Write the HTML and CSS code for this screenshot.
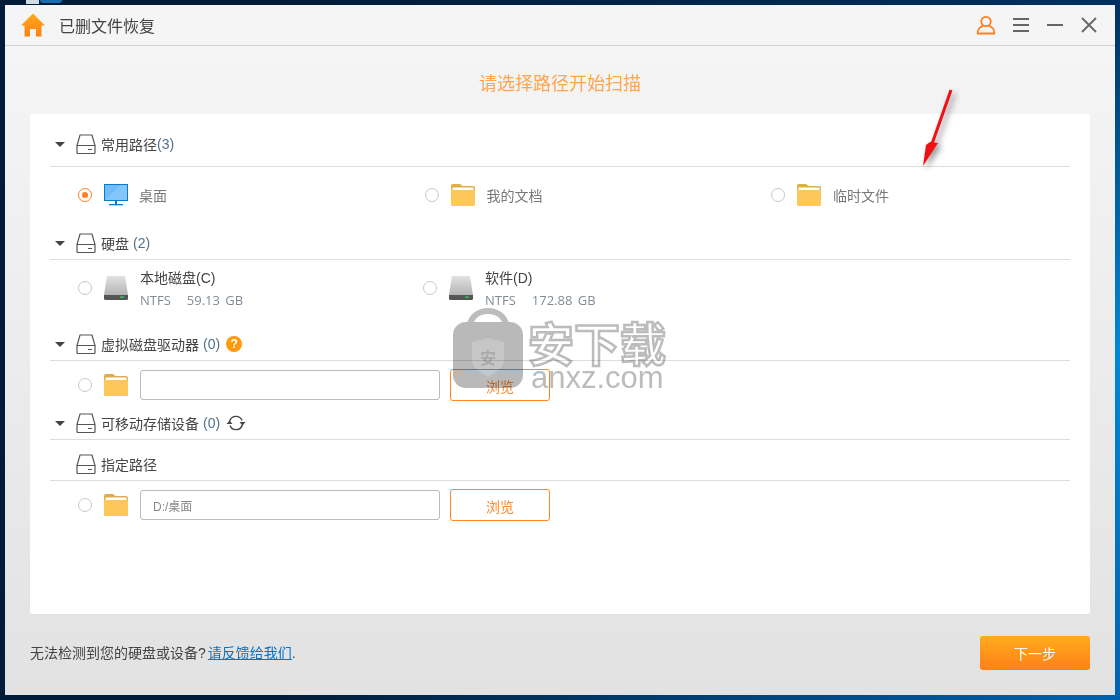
FILE: index.html
```html
<!DOCTYPE html>
<html>
<head>
    <meta charset="UTF-8">
    <title>已删文件恢复</title>
    <link rel="stylesheet" href="styles.css">
</head>
<body>
    <svg width="0" height="0" class="defs">
        <defs>
            <symbol id="disk" viewBox="0 0 20 20">
                <path d="M4 1h12l3 10.500v7a1 1 0 0 1-1 1h-16a1 1 0 0 1-1-1v-7zM1 11.500h18M12 15.500h4" fill="none" stroke="#555" stroke-width="1.200"/>
            </symbol>
            <symbol id="folder" viewBox="0 0 24 22">
                <path d="M0 2a2 2 0 0 1 2-2h7l2.500 2h10.500a2 2 0 0 1 2 2v4h-24z" fill="#dcae4e"/>
                <rect x="1.500" y="3.500" width="21" height="3" fill="#fff"/>
                <path d="M0 6h24v14.500a1.500 1.500 0 0 1-1.500 1.500h-21a1.500 1.500 0 0 1-1.500-1.500z" fill="#fdc759"/>
            </symbol>
            <symbol id="hdd" viewBox="0 0 24 24">
                <linearGradient id="hddtop" x1="0" y1="0" x2="0" y2="1">
                    <stop offset="0" stop-color="#e2e2e2"/>
                    <stop offset="1" stop-color="#b4b4b4"/>
                </linearGradient>
                <path d="M3 0h18l3 19h-24z" fill="url(#hddtop)"/>
                <path d="M0 19h24v3.500a1.500 1.500 0 0 1-1.500 1.500h-21a1.500 1.500 0 0 1-1.500-1.500z" fill="#555"/>
                <rect x="16" y="20.500" width="4" height="1.300" fill="#3fce5c"/>
            </symbol>
        </defs>
    </svg>

    <div class="desk-icon"></div>
    <div class="desk-ball"></div>

    <div class="window">
        <div class="titlebar">
            <svg class="home-icon" width="26" height="24" viewBox="0 0 26 24">
                <defs>
                    <linearGradient id="homefill" x1="0" y1="0" x2="0" y2="1">
                        <stop offset="0" stop-color="#ffaa1c"/>
                        <stop offset="1" stop-color="#ff7f16"/>
                    </linearGradient>
                </defs>
                <path d="M13 .5L25 12.500h-3.500V23.500h-5.500v-7.500h-6v7.500H4.500V12.500H1z" fill="url(#homefill)"/>
            </svg>
            <span class="app-name">已删文件恢复</span>
            <div class="win-btns">
                <svg width="20" height="20" viewBox="0 0 20 20" fill="none" stroke="#ff7f1e" stroke-width="1.800">
                    <circle cx="10" cy="6.500" r="4.700"/>
                    <path d="M1.500 18.500c0-4.500 3-7 5.500-7.500M18.500 18.500c0-4.500-3-7-5.500-7.500M1 18.500h18"/>
                </svg>
                <svg width="18" height="16" viewBox="0 0 18 16" fill="#666">
                    <rect x="1" y="1" width="16" height="2"/>
                    <rect x="1" y="7" width="16" height="2"/>
                    <rect x="1" y="13" width="16" height="2"/>
                </svg>
                <svg width="18" height="16" viewBox="0 0 18 16" fill="#666">
                    <rect x="1" y="7" width="16" height="2"/>
                </svg>
                <svg width="18" height="16" viewBox="0 0 16 16" fill="none" stroke="#666" stroke-width="1.800">
                    <path d="M1 1l14 14M15 1L1 15"/>
                </svg>
            </div>
        </div>

        <h2 class="page-title">请选择路径开始扫描</h2>

        <div class="card">
            <div class="sec-head sec-first">
                <span class="caret"></span>
                <svg class="disk" width="20" height="20"><use href="#disk"/></svg>
                <span>常用路径</span><span class="count">(3)</span>
            </div>
            <div class="row row-common">
                <div class="opt">
                    <span class="radio checked"></span>
                    <svg class="item-icon" width="24" height="22" viewBox="0 0 24 22">
                        <rect x=".5" y=".5" width="23" height="16" fill="#6fbcf8" stroke="#0a7ac8"/>
                        <path d="M1 16L17 1h6v15z" fill="#82c6fb"/>
                        <rect x="11" y="17" width="2" height="3" fill="#0a7ac8"/>
                        <rect x="5" y="20" width="14" height="1.300" fill="#0a7ac8"/>
                    </svg>
                    <span class="opt-name">桌面</span>
                </div>
                <div class="opt">
                    <span class="radio"></span>
                    <svg class="item-icon folder-icon" width="24" height="22"><use href="#folder"/></svg>
                    <span class="opt-name">我的文档</span>
                </div>
                <div class="opt">
                    <span class="radio"></span>
                    <svg class="item-icon folder-icon" width="24" height="22"><use href="#folder"/></svg>
                    <span class="opt-name">临时文件</span>
                </div>
            </div>

            <div class="sec-head">
                <span class="caret"></span>
                <svg class="disk" width="20" height="20"><use href="#disk"/></svg>
                <span>硬盘</span><span class="count count-gap">(2)</span>
            </div>
            <div class="row row-hdd">
                <div class="opt opt-hdd">
                    <span class="radio"></span>
                    <svg class="item-icon" width="24" height="24"><use href="#hdd"/></svg>
                    <div class="drive">
                        <div class="drive-name">本地磁盘(C)</div>
                        <div class="drive-info"><span>NTFS</span><span>59.13 GB</span></div>
                    </div>
                </div>
                <div class="opt opt-hdd">
                    <span class="radio"></span>
                    <svg class="item-icon" width="24" height="24"><use href="#hdd"/></svg>
                    <div class="drive">
                        <div class="drive-name">软件(D)</div>
                        <div class="drive-info"><span>NTFS</span><span>172.88 GB</span></div>
                    </div>
                </div>
            </div>

            <div class="sec-head">
                <span class="caret"></span>
                <svg class="disk" width="20" height="20"><use href="#disk"/></svg>
                <span>虚拟磁盘驱动器</span><span class="count count-gap">(0)</span>
                <span class="help">?</span>
            </div>
            <div class="row path-row">
                <span class="radio"></span>
                <svg class="item-icon" width="24" height="22"><use href="#folder"/></svg>
                <div class="path-box"></div>
                <div class="browse">浏览</div>
            </div>

            <div class="sec-head sec-usb">
                <span class="caret"></span>
                <svg class="disk" width="20" height="20"><use href="#disk"/></svg>
                <span>可移动存储设备</span><span class="count count-gap">(0)</span>
                <svg class="refresh" width="20" height="16" viewBox="0 0 20 16" fill="none" stroke="#444" stroke-width="1.400">
                    <path d="M3.600 6.500A6.500 6.500 0 0 1 16 5.500M16.400 9.500A6.500 6.500 0 0 1 4 10.500"/>
                    <path d="M13.500 7h6l-3 3.500zM.5 9h6l-3-3.500z" fill="#444" stroke="none"/>
                </svg>
            </div>

            <div class="sec-head sec-custom">
                <span class="caret-space"></span>
                <svg class="disk" width="20" height="20"><use href="#disk"/></svg>
                <span>指定路径</span>
            </div>
            <div class="row path-row">
                <span class="radio"></span>
                <svg class="item-icon" width="24" height="22"><use href="#folder"/></svg>
                <div class="path-box"><span class="path-text">D:/桌面</span></div>
                <div class="browse">浏览</div>
            </div>
        </div>

        <div class="footer">
            <span class="footer-text">无法检测到您的硬盘或设备?<a href="#" class="link">请反馈给我们</a>.</span>
            <div class="next-btn">下一步</div>
        </div>

        <!-- 水印 -->
        <div class="watermark">
            <svg class="wm-bag" width="72" height="80" viewBox="0 0 72 80">
                <path d="M17 18C20 7 28 3 36 3s16 4 19 15" fill="none" stroke="#bdbdbd" stroke-width="6"/>
                <rect x="1" y="14" width="70" height="66" rx="13" fill="#b9b9b9"/>
                <path d="M36 30l16 4v18c0 8-8 12-16 17-8-5-16-9-16-17V34z" fill="#c6c6c6"/>
                <text x="36" y="56" text-anchor="middle" class="wm-shield">安</text>
            </svg>
            <div class="wm-text">
                <span class="wm-cn">安下载</span>
                <span class="wm-en">anxz.com</span>
            </div>
        </div>

        <!-- 红色箭头 -->
        <svg class="arrow" width="40" height="84" viewBox="0 0 40 84">
            <path d="M30 1L11 55" stroke="#f20f14" stroke-width="3" fill="none"/>
            <path d="M2 77L5 56L9 53L17 54z" fill="#f20f14"/>
        </svg>
    </div>
</body>
</html>
```

FILE: styles.css
```css
* {
    box-sizing: border-box;
}

body {
    margin: 0;
    padding: 5px;
    height: 700px;
    overflow: hidden;
    background:
        linear-gradient(90deg, #001c38 0%, #001c38 25%, rgba(0, 28, 56, 0) 100%),
        linear-gradient(180deg, #00305f 0%, #0088d8 50%, #0062b0 100%);
    font-family: "Liberation Sans", "Noto Sans CJK SC", sans-serif;
    font-size: 14px;
    color: #444;
}

.defs {
    position: absolute;
}

/* 桌面上露出来的一点图标 */
.desk-icon {
    position: absolute;
    left: 26px;
    top: 0;
    width: 13px;
    height: 4px;
    background: #d5dbe2;
}

.desk-ball {
    position: absolute;
    left: 40px;
    top: 0;
    width: 22px;
    height: 3px;
    border-radius: 0 0 11px 11px;
    background: #1a6cb0;
}

.window {
    position: relative;
    width: 1110px;
    height: 690px;
    background: linear-gradient(180deg, #f6f6f6 0%, #e2e2e2 100%);
}

.titlebar {
    display: flex;
    align-items: center;
    height: 41px;
    padding: 0 17px 0 15px;
    background: #f5f5f5;
    border-bottom: 1px solid #d2d2d2;
}

.app-name {
    margin-left: 13px;
    font-size: 16px;
    color: #444;
}

.win-btns {
    display: flex;
    align-items: center;
    gap: 16px;
    margin-left: auto;
}

.page-title {
    margin: 0;
    height: 68px;
    line-height: 76px;
    text-align: center;
    font-size: 18px;
    font-weight: normal;
    color: #ffa54d;
}

.card {
    height: 500px;
    margin: 0 25px;
    padding: 0 20px;
    background: #fff;
    border-radius: 3px;
}

.sec-head {
    display: flex;
    align-items: center;
    border-bottom: 1px solid #ddd;
    padding-bottom: 6px;
}

.sec-first {
    padding-top: 20px;
    padding-bottom: 12px;
}

.sec-usb {
    margin-top: 4px;
}

.sec-custom {
    padding-top: 14px;
}

.caret {
    width: 0;
    height: 0;
    margin: 0 11px 0 5px;
    border-left: 5px solid transparent;
    border-right: 5px solid transparent;
    border-top: 5px solid #444;
}

.caret-space {
    width: 26px;
}

.disk {
    margin-right: 5px;
}

.count {
    color: #50708c;
}

.count-gap {
    margin-left: 4px;
}

.help {
    width: 16px;
    height: 16px;
    margin-left: 6px;
    border-radius: 50%;
    background: #ff9a0e;
    color: #fff;
    font-size: 12px;
    font-weight: bold;
    line-height: 16px;
    text-align: center;
}

.refresh {
    margin-left: 6px;
}

.row {
    display: flex;
    align-items: center;
}

.row-common {
    height: 66px;
    align-items: flex-start;
    padding-top: 17px;
}

.row-hdd {
    height: 74px;
    align-items: flex-start;
    padding-top: 7px;
}

.opt {
    flex: none;
    display: flex;
    align-items: center;
    width: 346.500px;
    padding-left: 28px;
}

.opt-hdd {
    width: 345px;
}

.opt-hdd .radio,
.opt-hdd .item-icon {
    margin-bottom: 2px;
}

.radio {
    flex: none;
    width: 14px;
    height: 14px;
    border: 1px solid #c8c8c8;
    border-radius: 50%;
    background: #fff;
}

.radio.checked {
    border-color: #ff7f2a;
    padding: 3px;
    background: #ff7f2a content-box;
}

.item-icon {
    margin-left: 12px;
    flex: none;
}

.folder-icon {
    margin-right: 1px;
}

.opt-name {
    margin-left: 11px;
    color: #777;
}

.drive {
    margin-left: 12px;
}

.drive-name {
    color: #444;
    line-height: 22px;
}

.drive-info {
    display: flex;
    gap: 16px;
    color: #7f8c98;
    line-height: 22px;
    font-family: "Open Sans", "Noto Sans CJK SC", sans-serif;
    font-size: 13px;
    word-spacing: 2px;
}

.path-row {
    height: 48px;
    padding-left: 28px;
}

.path-box {
    display: flex;
    align-items: center;
    width: 300px;
    height: 30px;
    margin-left: 12px;
    padding-left: 12px;
    border: 1px solid #bbb;
    border-radius: 3px;
}

.path-text {
    font-size: 12px;
    color: #888;
}

.browse {
    width: 100px;
    height: 32px;
    margin-left: 10px;
    border: 1px solid #ff8524;
    border-radius: 3px;
    color: #ff8a30;
    line-height: 34px;
    text-align: center;
}

.footer {
    display: flex;
    align-items: center;
    justify-content: space-between;
    padding: 22px 25px 0;
}

.footer-text {
    margin-bottom: 3px;
}

.link {
    margin-left: 2px;
    color: #0074d0;
}

.next-btn {
    width: 110px;
    height: 34px;
    border-radius: 3px;
    background: linear-gradient(180deg, #ffac1c 0%, #ff7f1a 100%);
    color: #fff;
    line-height: 36px;
    text-align: center;
}

/* 盖在内容上面的水印和箭头 */
.watermark {
    position: absolute;
    left: 447px;
    top: 303px;
    display: flex;
    gap: 4px;
    pointer-events: none;
    mix-blend-mode: multiply;
}

.wm-shield {
    font-size: 16px;
    font-weight: bold;
    fill: #aaa;
}

.wm-text {
    display: flex;
    flex-direction: column;
    margin-top: 13px;
}

.wm-cn {
    font-size: 46px;
    line-height: 48px;
    font-weight: bold;
    color: #fff;
    -webkit-text-stroke: 2.500px #bcbcbc;
}

.wm-en {
    padding-left: 3px;
    font-size: 31px;
    line-height: 18px;
    color: #bcbcbc;
}

.arrow {
    position: absolute;
    left: 916px;
    top: 84px;
    filter: drop-shadow(3px 3px 3px rgba(0, 0, 0, .45));
}
```
